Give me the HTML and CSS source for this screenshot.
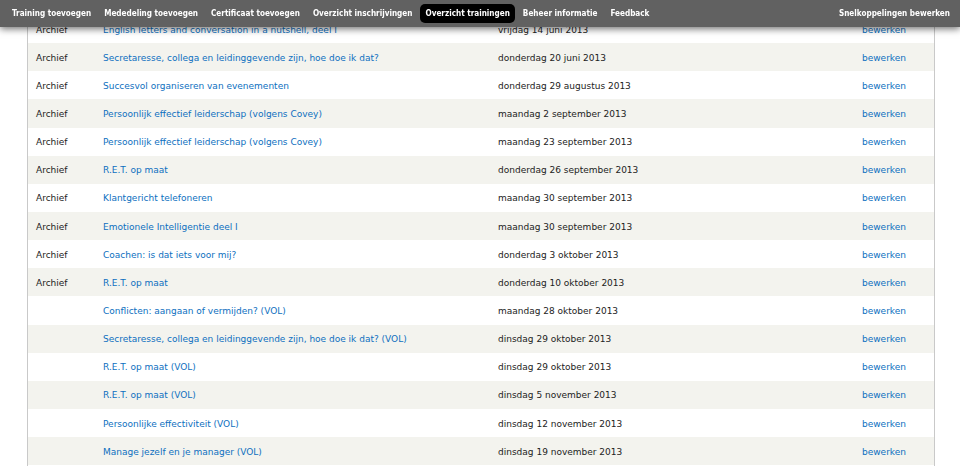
FILE: index.html
```html
<!DOCTYPE html>
<html lang="nl">
<head>
<meta charset="utf-8">
<title>Overzicht trainingen</title>
<link rel="stylesheet" href="styles.css">
</head>
<body>
<div class="toolbar">
  <nav class="menu">
    <a class="item" href="#">Training toevoegen</a>
    <a class="item" href="#">Mededeling toevoegen</a>
    <a class="item" href="#">Certificaat toevoegen</a>
    <a class="item" href="#">Overzicht inschrijvingen</a>
    <a class="item active" href="#">Overzicht trainingen</a>
    <a class="item" href="#">Beheer informatie</a>
    <a class="item" href="#">Feedback</a>
  </nav>
  <a class="item shortcuts" href="#">Snelkoppelingen bewerken</a>
</div>
<main class="page">
  <table class="list">
    <colgroup><col class="c1"><col class="c2"><col class="c3"><col class="c4"></colgroup>
    <tbody>
      <tr><td>Archief</td><td><a href="#">English letters and conversation in a nutshell, deel I</a></td><td>vrijdag 14 juni 2013</td><td><a href="#">bewerken</a></td></tr>
      <tr><td>Archief</td><td><a href="#">Secretaresse, collega en leidinggevende zijn, hoe doe ik dat?</a></td><td>donderdag 20 juni 2013</td><td><a href="#">bewerken</a></td></tr>
      <tr><td>Archief</td><td><a href="#">Succesvol organiseren van evenementen</a></td><td>donderdag 29 augustus 2013</td><td><a href="#">bewerken</a></td></tr>
      <tr><td>Archief</td><td><a href="#">Persoonlijk effectief leiderschap (volgens Covey)</a></td><td>maandag 2 september 2013</td><td><a href="#">bewerken</a></td></tr>
      <tr><td>Archief</td><td><a href="#">Persoonlijk effectief leiderschap (volgens Covey)</a></td><td>maandag 23 september 2013</td><td><a href="#">bewerken</a></td></tr>
      <tr><td>Archief</td><td><a href="#">R.E.T. op maat</a></td><td>donderdag 26 september 2013</td><td><a href="#">bewerken</a></td></tr>
      <tr><td>Archief</td><td><a href="#">Klantgericht telefoneren</a></td><td>maandag 30 september 2013</td><td><a href="#">bewerken</a></td></tr>
      <tr><td>Archief</td><td><a href="#">Emotionele Intelligentie deel I</a></td><td>maandag 30 september 2013</td><td><a href="#">bewerken</a></td></tr>
      <tr><td>Archief</td><td><a href="#">Coachen: is dat iets voor mij?</a></td><td>donderdag 3 oktober 2013</td><td><a href="#">bewerken</a></td></tr>
      <tr><td>Archief</td><td><a href="#">R.E.T. op maat</a></td><td>donderdag 10 oktober 2013</td><td><a href="#">bewerken</a></td></tr>
      <tr><td></td><td><a href="#">Conflicten: aangaan of vermijden? (VOL)</a></td><td>maandag 28 oktober 2013</td><td><a href="#">bewerken</a></td></tr>
      <tr><td></td><td><a href="#">Secretaresse, collega en leidinggevende zijn, hoe doe ik dat? (VOL)</a></td><td>dinsdag 29 oktober 2013</td><td><a href="#">bewerken</a></td></tr>
      <tr><td></td><td><a href="#">R.E.T. op maat (VOL)</a></td><td>dinsdag 29 oktober 2013</td><td><a href="#">bewerken</a></td></tr>
      <tr><td></td><td><a href="#">R.E.T. op maat (VOL)</a></td><td>dinsdag 5 november 2013</td><td><a href="#">bewerken</a></td></tr>
      <tr><td></td><td><a href="#">Persoonlijke effectiviteit (VOL)</a></td><td>dinsdag 12 november 2013</td><td><a href="#">bewerken</a></td></tr>
      <tr><td></td><td><a href="#">Manage jezelf en je manager (VOL)</a></td><td>dinsdag 19 november 2013</td><td><a href="#">bewerken</a></td></tr>
      <tr><td></td><td></td><td></td><td></td></tr>
    </tbody>
  </table>
</main>
</body>
</html>
```
FILE: styles.css
```css
html, body {
  margin: 0;
  padding: 0;
  background: #fff;
}
body {
  font-family: "DejaVu Sans", Verdana, sans-serif;
  font-size: 9px;
  color: #222;
  overflow: hidden;
}
a {
  text-decoration: none;
}

/* Toolbar */
.toolbar {
  position: fixed;
  top: 0;
  left: 0;
  right: 0;
  height: 27px;
  z-index: 10;
  background: #616161;
  box-shadow: 0 2px 7px rgba(0, 0, 0, 0.55);
  display: flex;
  align-items: center;
  justify-content: space-between;
  padding: 0 5px 0 7px;
}
.menu {
  display: flex;
  align-items: center;
  gap: 3px;
}
.item {
  color: #fff;
  font-family: "DejaVu Sans", Verdana, sans-serif;
  font-stretch: condensed;
  font-weight: bold;
  font-size: 8.1px;
  line-height: 19px;
  padding: 0 5px;
  border-radius: 5px;
  white-space: nowrap;
}
.item.active {
  background: #000;
}

/* Content */
.page {
  margin-left: 27px;
  width: 906px;
  border-left: 1px solid #c9c9c9;
  border-right: 1px solid #c9c9c9;
  padding-top: 15px;
}
.list {
  width: 100%;
  border-collapse: collapse;
  table-layout: fixed;
}
.c1 { width: 67px; }
.c2 { width: 395px; }
.c3 { width: 364px; }
.c4 { width: 80px; }
.list td {
  height: 28.15px;
  padding: 1px 8px 0;
  box-sizing: border-box;
  white-space: nowrap;
  overflow: hidden;
  vertical-align: middle;
}
.list tr:nth-child(even) td {
  background: #f3f3ee;
}
.list a {
  color: #0d6fc0;
}
```
